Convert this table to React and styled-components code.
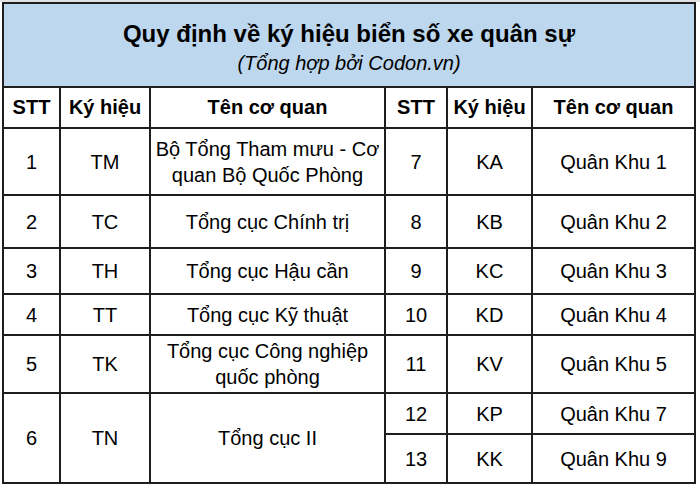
import React from "react";
import styled, { createGlobalStyle } from "styled-components";

const GlobalStyle = createGlobalStyle`
  html, body {
    margin: 0;
    padding: 0;
    background: #fff;
  }
  body {
    font-family: "Liberation Sans", Arial, sans-serif;
    color: #000;
  }
`;

const Sheet = styled.div`
  width: 700px;
  height: 487px;
  overflow: hidden;
  border-top: 2px solid #e2e2e2;
  box-sizing: border-box;
  padding-left: 2px;
`;

const Table = styled.table`
  border-collapse: collapse;
  table-layout: fixed;
  width: 694px;
  font-size: 20px;
`;

const Row = styled.tr`
  height: ${(p) => p.$h}px;
`;

const TitleCell = styled.th`
  background: #bdd7ee;
  border: 2px solid #1e1e1e;
  padding: 8px 0 0;
  vertical-align: middle;
  text-align: center;
`;

const Title = styled.div`
  font-size: 24px;
  font-weight: 700;
  line-height: 28px;
`;

const Subtitle = styled.div`
  font-size: 20px;
  font-style: italic;
  font-weight: 400;
  line-height: 30px;
`;

const HeadCell = styled.th`
  border: 2px solid #1e1e1e;
  font-weight: 700;
  font-size: 20px;
  text-align: center;
  vertical-align: middle;
  padding: 0 2px;
  white-space: nowrap;
`;

const Cell = styled.td`
  border: 2px solid #1e1e1e;
  text-align: center;
  vertical-align: middle;
  padding: 0 4px;
  line-height: 26px;
`;

const cols = [57, 90, 235, 62, 85, 163];
const heights = [67, 53, 46, 41, 58, 41, 49];

const left = [
  ["1", "TM", "Bộ Tổng Tham mưu - Cơ quan Bộ Quốc Phòng"],
  ["2", "TC", "Tổng cục Chính trị"],
  ["3", "TH", "Tổng cục Hậu cần"],
  ["4", "TT", "Tổng cục Kỹ thuật"],
  ["5", "TK", "Tổng cục Công nghiệp quốc phòng"],
  ["6", "TN", "Tổng cục II"],
];

const right = [
  ["7", "KA", "Quân Khu 1"],
  ["8", "KB", "Quân Khu 2"],
  ["9", "KC", "Quân Khu 3"],
  ["10", "KD", "Quân Khu 4"],
  ["11", "KV", "Quân Khu 5"],
  ["12", "KP", "Quân Khu 7"],
  ["13", "KK", "Quân Khu 9"],
];

const headers = ["STT", "Ký hiệu", "Tên cơ quan", "STT", "Ký hiệu", "Tên cơ quan"];

export default function App() {
  return (
    <>
      <GlobalStyle />
      <Sheet>
        <Table>
          <colgroup>
            {cols.map((w, i) => (
              <col key={i} style={{ width: w }} />
            ))}
          </colgroup>
          <tbody>
            <Row $h={84}>
              <TitleCell colSpan={6}>
                <Title>Quy định về ký hiệu biển số xe quân sự</Title>
                <Subtitle>(Tổng hợp bởi Codon.vn)</Subtitle>
              </TitleCell>
            </Row>
            <Row $h={41}>
              {headers.map((h, i) => (
                <HeadCell key={i}>{h}</HeadCell>
              ))}
            </Row>
            {right.map((r, i) => {
              const l = left[i];
              return (
                <Row key={r[0]} $h={heights[i]}>
                  {l &&
                    l.map((v, j) => (
                      <Cell key={j} rowSpan={i === 5 ? 2 : 1}>
                        {v}
                      </Cell>
                    ))}
                  {r.map((v, j) => (
                    <Cell key={"r" + j}>{v}</Cell>
                  ))}
                </Row>
              );
            })}
          </tbody>
        </Table>
      </Sheet>
    </>
  );
}
